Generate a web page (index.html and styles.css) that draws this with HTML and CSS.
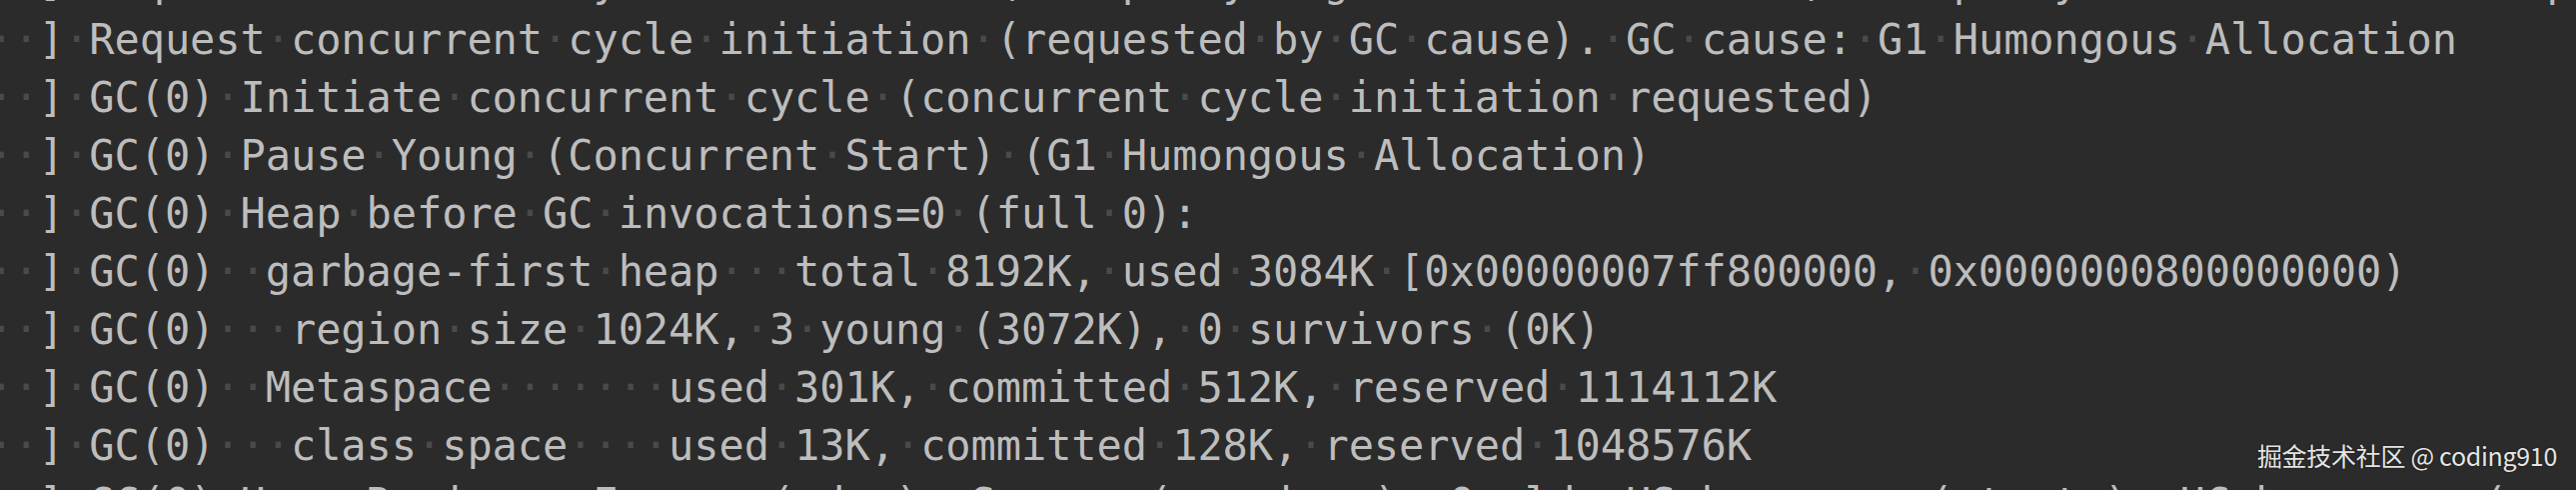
FILE: index.html
```html
<!DOCTYPE html>
<html lang="en">
<head>
<meta charset="utf-8">
<title>GC log</title>
<link rel="stylesheet" href="styles.css">
</head>
<body>
<div class="console">
  <div class="log">
    <div class="line"><i>··</i>]<i>·</i>Request<i>·</i>concurrent<i>·</i>cycle<i>·</i>initiation<i>·</i>(occupancy<i>·</i>higher<i>·</i>than<i>·</i>threshold)<i>·</i>occupancy:<i>·</i>0B<i>·</i>allocation<i>·</i>request:<i>·</i>4194320B<i>·</i>threshold:<i>·</i>3774873B<i>·</i>(45.00)<i>·</i>source:<i>·</i>concurrent<i>·</i>humongous<i>·</i>allocation</div>
    <div class="line"><i>··</i>]<i>·</i>Request<i>·</i>concurrent<i>·</i>cycle<i>·</i>initiation<i>·</i>(requested<i>·</i>by<i>·</i>GC<i>·</i>cause).<i>·</i>GC<i>·</i>cause:<i>·</i>G1<i>·</i>Humongous<i>·</i>Allocation</div>
    <div class="line"><i>··</i>]<i>·</i>GC(0)<i>·</i>Initiate<i>·</i>concurrent<i>·</i>cycle<i>·</i>(concurrent<i>·</i>cycle<i>·</i>initiation<i>·</i>requested)</div>
    <div class="line"><i>··</i>]<i>·</i>GC(0)<i>·</i>Pause<i>·</i>Young<i>·</i>(Concurrent<i>·</i>Start)<i>·</i>(G1<i>·</i>Humongous<i>·</i>Allocation)</div>
    <div class="line"><i>··</i>]<i>·</i>GC(0)<i>·</i>Heap<i>·</i>before<i>·</i>GC<i>·</i>invocations=0<i>·</i>(full<i>·</i>0):</div>
    <div class="line"><i>··</i>]<i>·</i>GC(0)<i>··</i>garbage-first<i>·</i>heap<i>···</i>total<i>·</i>8192K,<i>·</i>used<i>·</i>3084K<i>·</i>[0x00000007ff800000,<i>·</i>0x0000000800000000)</div>
    <div class="line"><i>··</i>]<i>·</i>GC(0)<i>···</i>region<i>·</i>size<i>·</i>1024K,<i>·</i>3<i>·</i>young<i>·</i>(3072K),<i>·</i>0<i>·</i>survivors<i>·</i>(0K)</div>
    <div class="line"><i>··</i>]<i>·</i>GC(0)<i>··</i>Metaspace<i>·······</i>used<i>·</i>301K,<i>·</i>committed<i>·</i>512K,<i>·</i>reserved<i>·</i>1114112K</div>
    <div class="line"><i>··</i>]<i>·</i>GC(0)<i>···</i>class<i>·</i>space<i>····</i>used<i>·</i>13K,<i>·</i>committed<i>·</i>128K,<i>·</i>reserved<i>·</i>1048576K</div>
    <div class="line"><i>··</i>]<i>·</i>GC(0)<i>·</i>Heap<i>·</i>Regions:<i>·</i>E=young(eden),<i>·</i>S=young(survivor),<i>·</i>O=old,<i>·</i>HS=humongous(starts),<i>·</i>HC=humongous(continues),<i>·</i>CS=collection<i>·</i>set,<i>·</i>F=free,<i>·</i>OA=open<i>·</i>archive,<i>·</i>CA=closed<i>·</i>archive,<i>·</i>TAMS=top-at-mark-start<i>·</i>(previous,<i>·</i>next)</div>
  </div>
  <div class="watermark">掘金技术社区 @ coding910</div>
</div>
</body>
</html>
```

FILE: styles.css
```css
html, body {
  margin: 0;
  padding: 0;
  background: #2b2b2b;
}

.console {
  position: relative;
  width: 2578px;
  height: 490px;
  overflow: hidden;
  background: #2b2b2b;
}

.log {
  display: flex;
  flex-direction: column;
  margin: -47px 0 0 -11.6px;
  font-family: "DejaVu Sans Mono", "Liberation Mono", monospace;
  font-size: 42px;
  line-height: 58px;
  letter-spacing: -0.08px;
  color: #bdbdbd;
}

.line {
  white-space: pre;
  height: 58px;
}

.line i {
  font-style: normal;
  color: #4a4a4a;
}

.watermark {
  position: absolute;
  top: 440px;
  right: 19px;
  font-family: "Noto Sans CJK SC", "Noto Sans", sans-serif;
  font-size: 25px;
  line-height: 30px;
  color: #e4e4e4;
  text-shadow: 0 0 2px rgba(0, 0, 0, 0.6);
  letter-spacing: -0.3px;
}
```
